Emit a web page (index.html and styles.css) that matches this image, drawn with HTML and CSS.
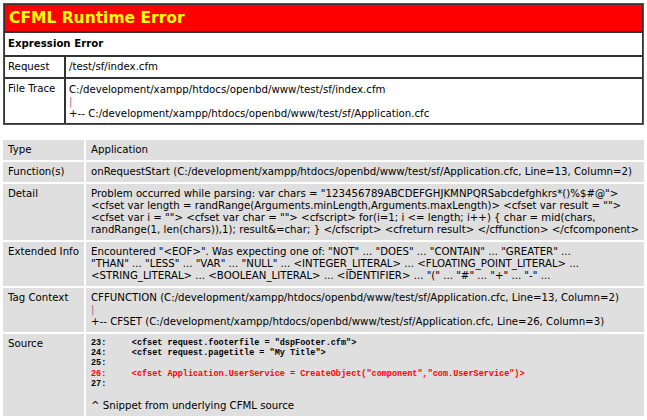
FILE: index.html
```html
<!DOCTYPE html>
<html>
<head>
<meta charset="utf-8">
<title>CFML Runtime Error</title>
<link rel="stylesheet" href="styles.css">
</head>
<body class="page">
<table class="err">
  <colgroup><col class="err-c1"><col></colgroup>
  <tr><td colspan="2" class="title">CFML Runtime Error</td></tr>
  <tr><td colspan="2" class="subtitle">Expression Error</td></tr>
  <tr><td class="label">Request</td><td>/test/sf/index.cfm</td></tr>
  <tr><td class="label">File Trace</td><td class="trace">C:/development/xampp/htdocs/openbd/www/test/sf/index.cfm<br><span class="pipe">|</span><br>+-- C:/development/xampp/htdocs/openbd/www/test/sf/Application.cfc</td></tr>
</table>

<table class="info">
  <colgroup><col class="info-c1"><col></colgroup>
  <tr><td class="label">Type</td><td>Application</td></tr>
  <tr><td class="label">Function(s)</td><td>onRequestStart (C:/development/xampp/htdocs/openbd/www/test/sf/Application.cfc, Line=13, Column=2)</td></tr>
  <tr><td class="label">Detail</td><td>Problem occurred while parsing: var chars = "123456789ABCDEFGHJKMNPQRSabcdefghkrs*()%$#@"&gt;<br>&lt;cfset var length = randRange(Arguments.minLength,Arguments.maxLength)&gt; &lt;cfset var result = ""&gt;<br>&lt;cfset var i = ""&gt; &lt;cfset var char = ""&gt; &lt;cfscript&gt; for(i=1; i &lt;= length; i++) { char = mid(chars,<br>randRange(1, len(chars)),1); result&amp;=char; } &lt;/cfscript&gt; &lt;cfreturn result&gt; &lt;/cffunction&gt; &lt;/cfcomponent&gt;</td></tr>
  <tr><td class="label">Extended Info</td><td>Encountered "&lt;EOF&gt;". Was expecting one of: "NOT" ... "DOES" ... "CONTAIN" ... "GREATER" ...<br>"THAN" ... "LESS" ... "VAR" ... "NULL" ... &lt;INTEGER_LITERAL&gt; ... &lt;FLOATING_POINT_LITERAL&gt; ...<br>&lt;STRING_LITERAL&gt; ... &lt;BOOLEAN_LITERAL&gt; ... &lt;IDENTIFIER&gt; ... "(" ... "#" ... "+" ... "-" ...</td></tr>
  <tr><td class="label">Tag Context</td><td>CFFUNCTION (C:/development/xampp/htdocs/openbd/www/test/sf/Application.cfc, Line=13, Column=2)<br><span class="pipe">|</span><br>+-- CFSET (C:/development/xampp/htdocs/openbd/www/test/sf/Application.cfc, Line=26, Column=3)</td></tr>
  <tr><td class="label">Source</td><td><pre class="src">23:	&lt;cfset request.footerfile = "dspFooter.cfm"&gt;
24:	&lt;cfset request.pagetitle = "My Title"&gt;
25:	
<span class="hot">26:	&lt;cfset Application.UserService = CreateObject("component","com.UserService")&gt;</span>
27:	</pre><div class="snippet">^ Snippet from underlying CFML source</div></td></tr>
</table>
</body>
</html>
```
FILE: styles.css
```css
.page {
  margin: 3px;
  background: #fff;
  font-family: "DejaVu Sans", Verdana, sans-serif;
  font-size: 10.2px;
  line-height: 12px;
  color: #000;
}
.err {
  width: 641px;
  table-layout: fixed;
  border: 1px solid #555;
  border-spacing: 0;
  margin-bottom: 13px;
}
.err-c1 {
  width: 61px;
}
.err td {
  border: 1px solid #333;
  padding: 4px 3px;
  vertical-align: top;
  background: #fff;
  white-space: nowrap;
  overflow: hidden;
}
.err .trace {
  padding-top: 5px;
  padding-bottom: 3px;
}
.err .title {
  background: #f00;
  color: #ff0;
  font-weight: bold;
  font-size: 15.5px;
  line-height: 20px;
  padding: 3px 4px;
}
.err .subtitle {
  font-weight: bold;
  padding: 5px 3px;
}
.pipe {
  color: #9a6a9a;
}
.info {
  width: 645px;
  table-layout: fixed;
  margin-left: -2px;
  border-spacing: 2px;
}
.info-c1 {
  width: 81px;
}
.info td {
  background: #dfdfdf;
  padding: 4px 5px;
  vertical-align: top;
  white-space: nowrap;
  overflow: hidden;
}
.src {
  margin: 0 0 11px 0;
  font-family: "Liberation Mono", "Courier New", monospace;
  font-weight: bold;
  font-size: 8.5px;
  line-height: 10.2px;
  tab-size: 8;
}
.hot {
  color: #f00;
}
.snippet {
  margin-bottom: 0;
}
```
